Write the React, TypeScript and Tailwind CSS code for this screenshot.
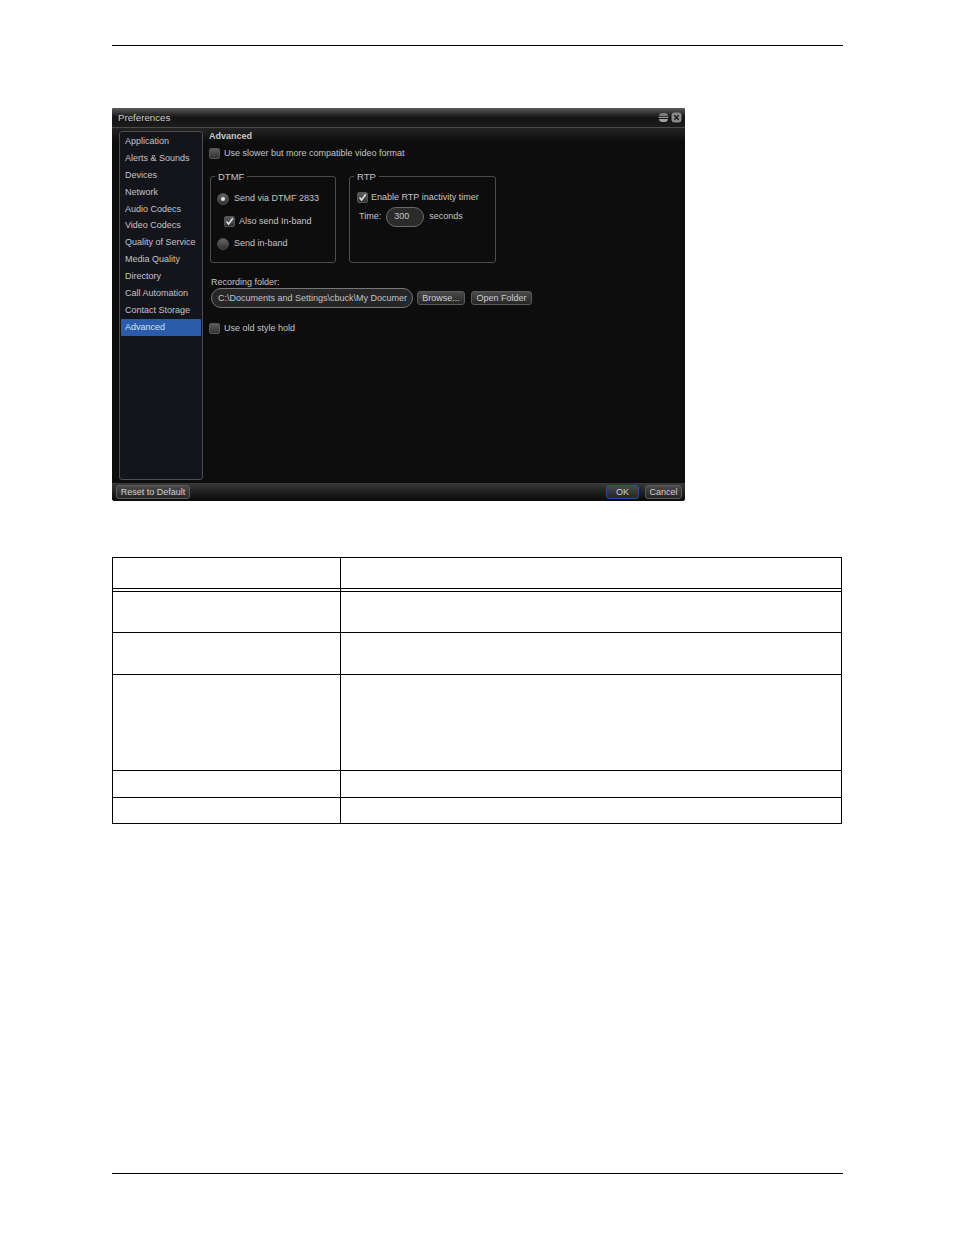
import React from "react";

const items = ["Application", "Alerts & Sounds", "Devices", "Network", "Audio Codecs", "Video Codecs", "Quality of Service", "Media Quality", "Directory", "Call Automation", "Contact Storage", "Advanced"];

function Check({ checked }: { checked?: boolean }) {
  return (
    <span className="flex h-[11px] w-[11px] shrink-0 items-center justify-center rounded-[2px] border border-[#555] bg-gradient-to-b from-[#5c5c5c] to-[#333]">
      {checked && (
        <svg width="9" height="9" viewBox="0 0 9 9" fill="none">
          <path d="M1.5 4.5 L3.6 7 L7.8 1.2" stroke="#e0e0e0" strokeWidth="1.6" />
        </svg>
      )}
    </span>
  );
}

function Radio({ on }: { on?: boolean }) {
  return (
    <span className="flex h-3 w-3 shrink-0 items-center justify-center rounded-full border border-[#4c4c4c] bg-gradient-to-b from-[#666] to-[#333]">
      {on && <span className="h-1 w-1 rounded-full bg-[#e8e8e8]" />}
    </span>
  );
}

function Btn({ children, w, blue }: { children: React.ReactNode; w: string; blue?: boolean }) {
  return (
    <span className={`flex h-[14px] items-center justify-center rounded-[3px] border bg-gradient-to-b from-[#4a4a4a] to-[#262626] text-[9px] text-[#cfcfcf] ${w} ${blue ? "border-[#1f4f9c]" : "border-[#5a5a5a]"}`}>
      {children}
    </span>
  );
}

export default function App() {
  return (
    <div className="h-[1235px] w-[954px] bg-white px-[112px] pt-[45px] [font-family:'Liberation_Sans',Arial,sans-serif]">
      <div className="h-px w-[731px] bg-black" />

      <div className="mt-[62px] flex h-[393px] w-[573px] flex-col overflow-hidden rounded-t-[2px] rounded-b-[3px] bg-[#0d0d0e] text-[9px] leading-none text-[#c4c4c4]">
        <div className="flex h-5 shrink-0 items-center justify-between border-b border-[#4a4a4a] bg-gradient-to-b from-[#5a5a5a] via-[#141414] to-[#1c1c1c] pl-[6px] pr-[3px]">
          <span className="text-[9.7px] text-[#cdcdcd]">Preferences</span>
          <span className="flex items-center gap-[2px]">
            <svg width="11" height="11" viewBox="0 0 11 11">
              <path d="M1 4 C1 1.5 3 1 5.5 1 C8 1 10 1.5 10 4 Z" fill="#7a7a7a" />
              <rect x="0.5" y="4.8" width="10" height="1.2" fill="#9a9a9a" />
              <path d="M1 7 H10 C10 9.5 8 10 5.5 10 C3 10 1 9.5 1 7 Z" fill="#a0a0a0" />
            </svg>
            <svg width="11" height="11" viewBox="0 0 11 11">
              <rect x="0.5" y="0.5" width="10" height="10" rx="3" fill="#8a8a8a" />
              <path d="M3.3 3.3 L7.7 7.7 M7.7 3.3 L3.3 7.7" stroke="#1c1c1c" strokeWidth="1.5" />
            </svg>
          </span>
        </div>

        <div className="flex min-h-0 flex-1 bg-gradient-to-b from-[#242424] from-0% via-[#0d0d0e] via-[4%] to-[#0d0d0e] pl-[7px] pt-[3px]">
          <div className="h-[349px] w-[84px] shrink-0 rounded-[3px] border border-[#4a4d55] bg-[#14151b] px-[1px] pt-px">
            {items.map((t) => (
              <div key={t} className={`flex h-[16.9px] items-center rounded-[1px] pl-[4px] whitespace-nowrap ${t === "Advanced" ? "bg-[#2a5cab] text-[#d8e2f2]" : ""}`}>
                {t}
              </div>
            ))}
          </div>

          <div className="ml-[6px] flex-1">
            <div className="mt-[1px] font-bold text-[#c8c8c8]">Advanced</div>
            <div className="mt-[7px] flex h-[11px] items-center gap-1">
              <Check />
              <span>Use slower but more compatible video format</span>
            </div>

            <div className="mt-[13px] ml-px flex gap-[13px]">
              <fieldset className="h-[91px] w-[126px] rounded-[3px] border border-[#4c4c4c] pl-[6px]">
                <legend className="ml-[-2px] px-[3px] text-[9.5px] text-[#c4c4c4]">DTMF</legend>
                <div className="mt-[11px] flex h-3 items-center gap-[5px]">
                  <Radio on />
                  <span>Send via DTMF 2833</span>
                </div>
                <div className="mt-[11px] ml-[7px] flex h-[11px] items-center gap-[4px]">
                  <Check checked />
                  <span>Also send In-band</span>
                </div>
                <div className="mt-[11px] flex h-3 items-center gap-[5px]">
                  <Radio />
                  <span>Send in-band</span>
                </div>
              </fieldset>
              <fieldset className="h-[91px] w-[147px] rounded-[3px] border border-[#4c4c4c] pl-[7px]">
                <legend className="ml-[-3px] px-[3px] text-[9.5px] text-[#c4c4c4]">RTP</legend>
                <div className="mt-[10px] flex h-[11px] items-center gap-[3px]">
                  <Check checked />
                  <span>Enable RTP inactivity timer</span>
                </div>
                <div className="mt-[4px] ml-[2px] flex items-center">
                  <span>Time:</span>
                  <span className="ml-[5px] flex h-5 w-[38px] items-center rounded-full border border-[#6a6a6a] bg-[#2b2b2b] pl-[7px]">300</span>
                  <span className="ml-[5px]">seconds</span>
                </div>
              </fieldset>
            </div>

            <div className="mt-[15px] ml-[2px]">Recording folder:</div>
            <div className="mt-[1px] ml-[2px] flex items-center">
              <span className="flex h-5 w-[202px] items-center overflow-hidden whitespace-nowrap rounded-full border border-[#777] bg-[#262626] pl-[6px] pr-[4px]">
                {"C:\\Documents and Settings\\cbuck\\My Documer"}
              </span>
              <span className="ml-1"><Btn w="w-[48px]">Browse...</Btn></span>
              <span className="ml-[6px]"><Btn w="w-[61px]">Open Folder</Btn></span>
            </div>

            <div className="mt-[15px] flex h-[11px] items-center gap-1">
              <Check />
              <span>Use old style hold</span>
            </div>
          </div>
        </div>

        <div className="flex h-[18px] shrink-0 items-center justify-between bg-gradient-to-b from-[#3a3a3a] to-[#0a0a0a] pl-[4px] pr-[3px]">
          <Btn w="w-[74px]">Reset to Default</Btn>
          <span className="flex gap-[6px]">
            <Btn w="w-[33px]" blue>OK</Btn>
            <Btn w="w-[37px]">Cancel</Btn>
          </span>
        </div>
      </div>

      <table className="mt-[56px] h-[267px] w-[730px] table-fixed border-collapse">
        <colgroup>
          <col className="w-[228px]" />
          <col />
        </colgroup>
        <tbody>
          <tr className="h-[31px] border border-b-0 border-black">
            <td className="border-r border-black" />
            <td />
          </tr>
          <tr className="h-[3px] border-x border-y border-black">
            <td className="border-r border-black p-0" />
            <td className="p-0" />
          </tr>
          {[41, 42, 96, 27, 26].map((h) => (
            <tr key={h} className="border border-black" style={{ height: h }}>
              <td className="border-r border-black" />
              <td />
            </tr>
          ))}
        </tbody>
      </table>

      <div className="mt-[349px] h-px w-[731px] bg-black" />
    </div>
  );
}
